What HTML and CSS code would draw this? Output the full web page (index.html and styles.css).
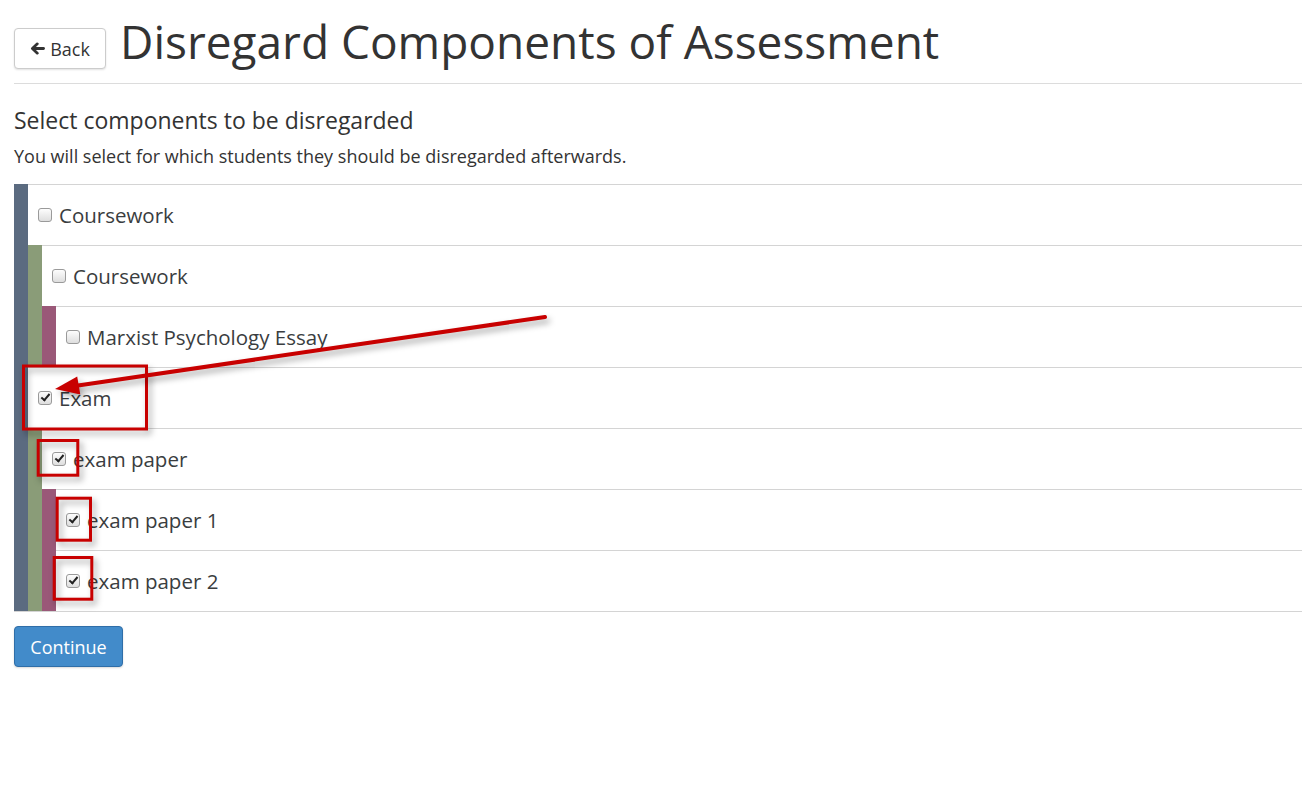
FILE: index.html
```html
<!DOCTYPE html>
<html lang="en">
<head>
<meta charset="utf-8">
<title>Disregard Components of Assessment</title>
<link rel="stylesheet" href="styles.css">
</head>
<body>
<div class="page">
  <header class="page-header">
    <a class="btn btn-default" href="#">
      <svg class="icon-back" viewBox="0 0 16 14" width="15" height="13" aria-hidden="true">
        <path d="M14.5 7H4" fill="none" stroke="#333" stroke-width="3" stroke-linecap="round"/>
        <path d="M7.8 2 L2.5 7 L7.8 12" fill="none" stroke="#333" stroke-width="3" stroke-linecap="round" stroke-linejoin="round"/>
      </svg>
      Back
    </a>
    <h1 class="title">Disregard Components of Assessment</h1>
  </header>

  <h2 class="subheading">Select components to be disregarded</h2>
  <p class="hint">You will select for which students they should be disregarded afterwards.</p>

  <div class="tree-wrap">
    <div class="group level-0">
      <label class="row"><input type="checkbox" class="cb"><span>Coursework</span></label>
      <div class="group level-1">
        <label class="row"><input type="checkbox" class="cb"><span>Coursework</span></label>
        <div class="group level-2">
          <label class="row"><input type="checkbox" class="cb"><span>Marxist Psychology Essay</span></label>
        </div>
      </div>
      <label class="row"><input type="checkbox" class="cb" checked><span>Exam</span></label>
      <div class="group level-1">
        <label class="row"><input type="checkbox" class="cb" checked><span>exam paper</span></label>
        <div class="group level-2">
          <label class="row"><input type="checkbox" class="cb" checked><span>exam paper 1</span></label>
          <label class="row"><input type="checkbox" class="cb" checked><span>exam paper 2</span></label>
        </div>
      </div>
    </div>
  </div>

  <button class="btn btn-primary" type="button">Continue</button>
</div>

<svg class="annotations" viewBox="0 0 1302 800" width="1302" height="800" aria-hidden="true">
  <g class="shadowed" fill="none" stroke="#c80000" stroke-width="3">
    <rect x="23.5" y="366" width="123" height="63"/>
    <rect x="38.2" y="440.5" width="39.6" height="34.7"/>
    <rect x="57.2" y="498.2" width="33.3" height="42"/>
    <rect x="54.2" y="557.5" width="37.6" height="41.7"/>
  </g>
  <g class="shadowed">
    <line x1="545" y1="317" x2="78" y2="385.5" stroke="#c80000" stroke-width="4" stroke-linecap="round"/>
    <polygon points="55,389 80.3,394.6 77.2,376.4" fill="#c80000"/>
  </g>
</svg>
</body>
</html>
```

FILE: styles.css
```css
html, body {
  margin: 0;
  padding: 0;
  background: #fff;
}

body {
  position: relative;
  font-family: "Open Sans", "Liberation Sans", sans-serif;
  color: #333;
  width: 1302px;
  height: 800px;
  overflow: hidden;
}

.page {
  padding-left: 14px;
}

.page-header {
  display: flex;
  align-items: flex-start;
  gap: 14px;
  padding-top: 16px;
  padding-bottom: 14px;
  border-bottom: 1px solid #dcdcdc;
}

.title {
  margin: 0;
  font-size: 46px;
  font-weight: 400;
  line-height: 50px;
  color: #333;
}

.btn {
  display: inline-flex;
  align-items: center;
  box-sizing: border-box;
  height: 41px;
  padding: 0 15px;
  font-family: "Open Sans", "Liberation Sans", sans-serif;
  font-size: 18px;
  line-height: 1;
  border-radius: 4px;
  text-decoration: none;
  cursor: pointer;
}

.btn-default {
  margin-top: 12px;
  width: 92px;
  gap: 5px;
  justify-content: center;
  padding: 0;
  color: #333;
  background: #fff;
  border: 1px solid #ccc;
  box-shadow: 0 1px 2px rgba(0, 0, 0, 0.12);
}

.icon-back {
  display: block;
}

.subheading {
  margin: 24px 0 0;
  font-size: 23px;
  font-weight: 400;
  line-height: 25px;
  color: #333;
}

.hint {
  margin: 11px 0 0;
  font-size: 18px;
  line-height: 24px;
  color: #333;
}

.tree-wrap {
  margin-top: 16px;
  border-bottom: 1px solid #d4d4d4;
}

.group.level-0 {
  border-left: 14px solid #5b6b80;
}

.group.level-1 {
  border-left: 14px solid #8a9c78;
}

.group.level-2 {
  border-left: 14px solid #9a5878;
}

.row {
  display: flex;
  align-items: center;
  gap: 7px;
  height: 60px;
  padding-left: 10px;
  border-top: 1px solid #d4d4d4;
  font-size: 20.5px;
  color: #3a3d40;
  cursor: pointer;
}

.cb {
  appearance: none;
  -webkit-appearance: none;
  position: relative;
  box-sizing: border-box;
  width: 14px;
  height: 14px;
  margin: -1px 0 0 0;
  border: 1px solid #9a9a9a;
  border-radius: 3px;
  background: linear-gradient(#fdfdfd, #dedede);
  flex: none;
}

.cb:checked::after {
  content: "";
  position: absolute;
  left: 3.5px;
  top: 0.5px;
  width: 3px;
  height: 7px;
  border: solid #222;
  border-width: 0 2px 2px 0;
  transform: rotate(40deg);
}

.btn-primary {
  margin-top: 14px;
  width: 109px;
  justify-content: center;
  padding: 0;
  color: #fff;
  background: #428bca;
  border: 1px solid #2f6ea8;
  box-shadow: 0 1px 2px rgba(0, 0, 0, 0.15);
}

.annotations {
  position: absolute;
  left: 0;
  top: 0;
  pointer-events: none;
}

.shadowed {
  filter: drop-shadow(3px 4px 3px rgba(0, 0, 0, 0.35));
}
```
